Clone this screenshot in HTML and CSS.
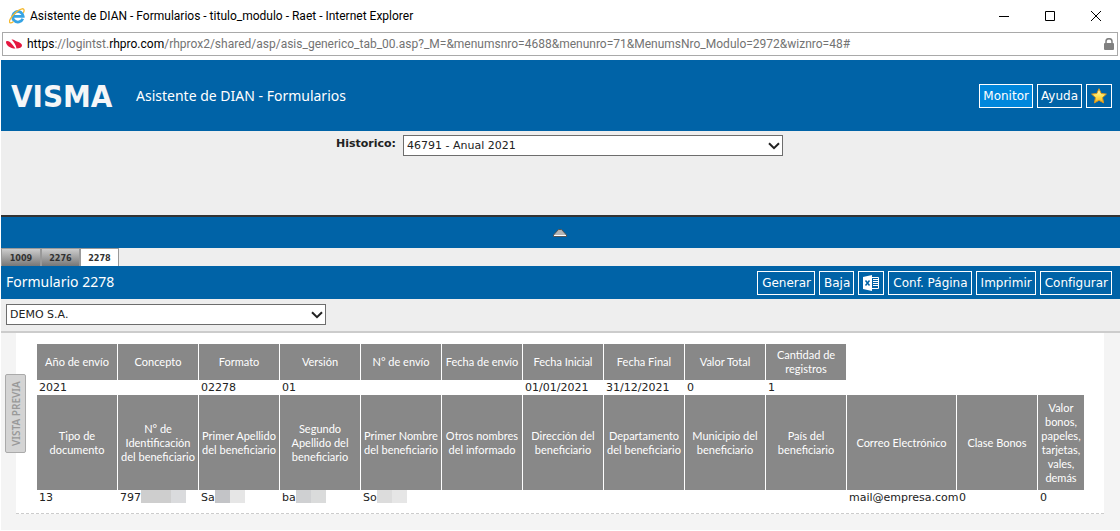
FILE: index.html
```html
<!DOCTYPE html>
<html lang="es">
<head>
<meta charset="utf-8">
<title>Asistente de DIAN - Formularios</title>
<link rel="stylesheet" href="styles.css">
</head>
<body>
<div class="titlebar">
  <svg class="ie" viewBox="0 0 16 16" width="16" height="16" aria-hidden="true">
    <path d="M13.8 10.800A5.300 5.300 0 1 1 14.200 8.400H5" fill="none" stroke="#35a3e3" stroke-width="2.800"/>
    <path d="M4.500 13.500C1 16.300-.8 14.500 1.700 10.400 4 6.500 9 1.500 13 .8c2.500-.3 2.500 2 1.300 4" fill="none" stroke="#f5b92f" stroke-width="1.300"/>
  </svg>
  <span class="window-title">Asistente de DIAN - Formularios - titulo_modulo - Raet - Internet Explorer</span>
  <div class="window-buttons">
    <button type="button" aria-label="Minimizar"><svg viewBox="0 0 10 10" width="10" height="10"><path d="M0 5.500h10"/></svg></button>
    <button type="button" aria-label="Maximizar"><svg viewBox="0 0 10 10" width="10" height="10"><path d="M.5.5h9v9h-9z"/></svg></button>
    <button type="button" aria-label="Cerrar"><svg viewBox="0 0 10 10" width="10" height="10"><path d="M0 0l10 10M10 0L0 10"/></svg></button>
  </div>
</div>
<div class="address">
  <svg viewBox="0 0 16 10" width="16" height="10" aria-hidden="true">
    <path d="M0 3C0 1.500 2 1.500 4 3 6 4.800 7.500 7 9.500 9.600 4 9.500 0 6 0 3z" fill="#e5173f"/>
    <path d="M5.500.5C7.500 0 9 1.500 11 2.500 14 3.500 16 4.500 16 6.500c0 2-2.500 3-5.500 3C10 6 8 3 5.500.5z" fill="#e5173f"/>
  </svg>
  <span class="url"><b>https</b>://logintst.<b>rhpro.com</b>/rhprox2/shared/asp/asis_generico_tab_00.asp?_M=&amp;menumsnro=4688&amp;menunro=71&amp;MenumsNro_Modulo=2972&amp;wiznro=48#</span>
  <svg class="lock" viewBox="0 0 10 12" width="10" height="12" aria-hidden="true">
    <path d="M2 6V3.500a3 2.800 0 0 1 6 0V6" fill="none" stroke="#808080" stroke-width="1.500"/>
    <rect y="5" width="10" height="7" rx="1" fill="#808080"/>
  </svg>
</div>
<div class="app">
  <header class="header">
    <span class="logo">VISMA</span>
    <h1>Asistente de DIAN - Formularios</h1>
    <div class="actions">
      <button type="button" class="btn btn-active">Monitor</button>
      <button type="button" class="btn">Ayuda</button>
      <button type="button" class="btn btn-icon" aria-label="Favoritos">
        <svg viewBox="0 0 16 16" width="16" height="16">
          <defs><linearGradient id="gold" x1="0" y1="0" x2="0" y2="1"><stop offset="0" stop-color="#fffbd0"/><stop offset=".5" stop-color="#ffe65a"/><stop offset="1" stop-color="#f3b21c"/></linearGradient></defs>
          <path d="M8 .7l2.200 4.800 5.200.6-3.900 3.500 1.100 5.300L8 12.300l-4.600 2.600 1.100-5.300L.6 6.100l5.200-.6z" fill="url(#gold)" stroke="#d9951c" stroke-width="1" stroke-linejoin="round"/>
        </svg>
      </button>
    </div>
  </header>
  <div class="filter">
    <label for="historico">Historico:</label>
    <div class="select select-wide">
      <select id="historico"><option>46791 - Anual 2021</option></select>
      <svg viewBox="0 0 12 8" width="12" height="8" aria-hidden="true"><path d="M1 1.200l5 5 5-5"/></svg>
    </div>
  </div>
  <button type="button" class="collapse" aria-label="Contraer">
    <svg viewBox="0 0 14 8" width="14" height="8"><path d="M5.500.5h3L13.500 6v1.500H.5V6z" fill="#b5b5b5" stroke="#555"/><path d="M1 6.500h12" stroke="#fff"/></svg>
  </button>
  <nav class="tabs">
    <button type="button">1009</button>
    <button type="button">2276</button>
    <button type="button" class="current">2278</button>
  </nav>
  <div class="formbar">
    <h2>Formulario 2278</h2>
    <div class="actions">
      <button type="button" class="btn">Generar</button>
      <button type="button" class="btn">Baja</button>
      <button type="button" class="btn btn-icon" aria-label="Excel">
        <svg viewBox="0 0 16 16" width="16" height="16">
          <path d="M0 2l9-2v16l-9-2z" fill="#fff"/>
          <path d="M2.500 5.500l4 5M6.500 5.500l-4 5" stroke="#0063a7" stroke-width="1.500"/>
          <path d="M9 2.500h6.500v11H9" fill="none" stroke="#fff"/>
          <path d="M10 4.500h5M10 6.500h5M10 8.500h5M10 10.500h5" stroke="#fff"/>
        </svg>
      </button>
      <button type="button" class="btn">Conf. Página</button>
      <button type="button" class="btn">Imprimir</button>
      <button type="button" class="btn">Configurar</button>
    </div>
  </div>
  <div class="company">
    <div class="select">
      <select id="empresa" aria-label="Empresa"><option>DEMO S.A.</option></select>
      <svg viewBox="0 0 12 8" width="12" height="8" aria-hidden="true"><path d="M1 1.200l5 5 5-5"/></svg>
    </div>
  </div>
  <main class="preview">
    <button type="button" class="preview-tab">VISTA PREVIA</button>
    <div class="sheet">
      <table>
        <colgroup><col span="10" class="c-std"><col class="c-mail"><col class="c-std"><col class="c-last"></colgroup>
        <tr class="short"><th>Año de envío</th><th>Concepto</th><th>Formato</th><th>Versión</th><th>N° de envío</th><th>Fecha de envío</th><th>Fecha Inicial</th><th>Fecha Final</th><th>Valor Total</th><th>Cantidad de registros</th></tr>
        <tr><td>2021</td><td></td><td>02278</td><td>01</td><td></td><td></td><td>01/01/2021</td><td>31/12/2021</td><td>0</td><td>1</td></tr>
        <tr class="tall"><th>Tipo de documento</th><th>N° de Identificación del beneficiario</th><th>Primer Apellido del beneficiario</th><th>Segundo Apellido del beneficiario</th><th>Primer Nombre del beneficiario</th><th>Otros nombres del informado</th><th>Dirección del beneficiario</th><th>Departamento del beneficiario</th><th>Municipio del beneficiario</th><th>País del beneficiario</th><th>Correo Electrónico</th><th>Clase Bonos</th><th>Valor bonos, papeles, tarjetas, vales, demás</th></tr>
        <tr><td>13</td><td>797<span class="mask mask-long"></span></td><td>Sa<span class="mask mask-dark"></span></td><td>ba<span class="mask"></span></td><td>So<span class="mask mask-light"></span></td><td></td><td></td><td></td><td></td><td></td><td>mail@empresa.com</td><td>0</td><td>0</td></tr>
      </table>
    </div>
  </main>
</div>
</body>
</html>
```
FILE: styles.css
```css
* { box-sizing: border-box; }
html, body { min-height: 100%; }
body {
  margin: 0;
  min-height: 100vh;
  display: flex;
  flex-direction: column;
  background: #fff;
  color: #222;
  font: 11px/14px "DejaVu Sans", sans-serif;
}
button { font: inherit; color: inherit; border: 0; margin: 0; padding: 0; background: none; }
svg { display: block; flex: none; }
h1, h2 { margin: 0; font-weight: 400; color: #fff; }

.titlebar { display: flex; align-items: center; height: 32px; padding: 0 11px 0 9px; gap: 5px; font: 12px/16px Roboto, sans-serif; color: #000; }
.window-title { flex: 1; }
.window-buttons { display: flex; }
.window-buttons button { width: 46px; height: 30px; display: grid; place-items: center; }
.window-buttons button:last-child { width: 26px; margin-left: 10px; }
.window-buttons svg { fill: none; stroke: #000; stroke-width: 1; }

.address { display: flex; align-items: center; gap: 5px; height: 24px; margin: 0 2px 4px; padding: 0 3px; border: 1px solid #a9a9a9; font: 12px/16px Roboto, sans-serif; color: #737373; white-space: nowrap; }
.url { flex: 1; min-width: 0; overflow: hidden; }
.url b { font-weight: 400; color: #000; }

.app { flex: 1; display: flex; flex-direction: column; margin: 0 0 1px 1px; background: #eee; }
.header { display: flex; align-items: center; height: 71px; padding: 0 8px 0 10px; background: #0063a7; }
.logo { width: 125px; color: #f4f6f8; font: 700 31px/44px "DejaVu Sans Condensed", "DejaVu Sans", sans-serif; }
.header h1 { font: 14px/20px "Noto Sans", sans-serif; }
.actions { display: flex; gap: 4px; margin-left: auto; }
.btn { height: 24px; padding: 0 3px; border: 1px solid #fff; color: #fff; font: 12px/20px "DejaVu Sans", sans-serif; white-space: nowrap; }
.btn-active { background: #0087dc; }
.btn-icon { width: 26px; display: grid; place-items: center; }

.filter { display: flex; justify-content: center; align-items: flex-start; gap: 7px; height: 84px; padding: 4px 2px 0 0; }
.filter label { font-weight: 700; line-height: 18px; }
.select { display: grid; width: 320px; align-items: center; }
.select-wide { width: 380px; }
.select select { grid-area: 1 / 1; height: 21px; appearance: none; border: 1px solid #6d6d6d; border-radius: 0; background: #fff; color: #222; padding: 0 3px; font: inherit; }
.select svg { grid-area: 1 / 1; justify-self: end; margin-right: 3px; fill: none; stroke: #222; stroke-width: 2; pointer-events: none; }

.collapse { display: grid; place-items: center; height: 33px; padding-right: 2px; border-top: 2px solid #333; background: #0063a7; }
.tabs { display: flex; height: 18px; }
.tabs button { width: 39px; border: 1px solid #999; border-bottom: 0; background: linear-gradient(#ccc, #777); color: #333; font: 700 9px/16px "DejaVu Sans Condensed", "DejaVu Sans", sans-serif; }
.tabs button:first-child { width: 40px; }
.tabs .current { background: #fff; }
.formbar { display: flex; align-items: center; height: 33px; padding: 0 8px 0 5px; background: #0063a7; }
.formbar h2 { padding-bottom: 2px; font: 14px/20px "Noto Sans", sans-serif; }
.formbar .btn:not(.btn-icon) { padding-left: 4px; }
.company { height: 34px; padding: 5px; border-bottom: 2px solid #ccc; }

.preview { flex: 1; display: flex; align-items: flex-start; padding: 0 16px 0 4px; background: #f4f4f4; }
.preview-tab { position: relative; width: 21px; height: 79px; margin: 41px -10px 0 0; border: 1px solid #aaa; border-radius: 2px; background: #d4d4d4; color: #999; font: 600 10px/18px "Noto Sans", sans-serif; writing-mode: vertical-rl; rotate: 180deg; white-space: nowrap; }
.sheet { flex: 1; min-width: 0; padding: 11px 18px 8px 21px; border-bottom: 1px dashed #ccc; background: #fff; }
table { width: 1048px; table-layout: fixed; border-collapse: separate; border-spacing: 0; }
.c-std { width: 81px; }
.c-mail { width: 110px; }
.c-last { width: 47px; }
th { padding: 0 1px; border-right: 1px solid #fff; background: #888; color: #fff; font: 11px/14px Lato, sans-serif; }
.short th { height: 36px; }
.tall th { height: 95px; }
td { height: 15px; padding: 0 2px; line-height: 15px; white-space: nowrap; }
.mask { display: inline-block; width: 30px; height: 13px; vertical-align: top; background: linear-gradient(90deg, #cfd0d2 50%, #dadbdb 50%); }
.mask-long { width: 45px; background: linear-gradient(90deg, #cecece 67%, #dadbdd 67%); }
.mask-dark { background: linear-gradient(90deg, #c3c4c7 50%, #e6e6e6 50%); }
.mask-light { background: linear-gradient(90deg, #dcdcdc 50%, #e6e6e6 50%); }
```
